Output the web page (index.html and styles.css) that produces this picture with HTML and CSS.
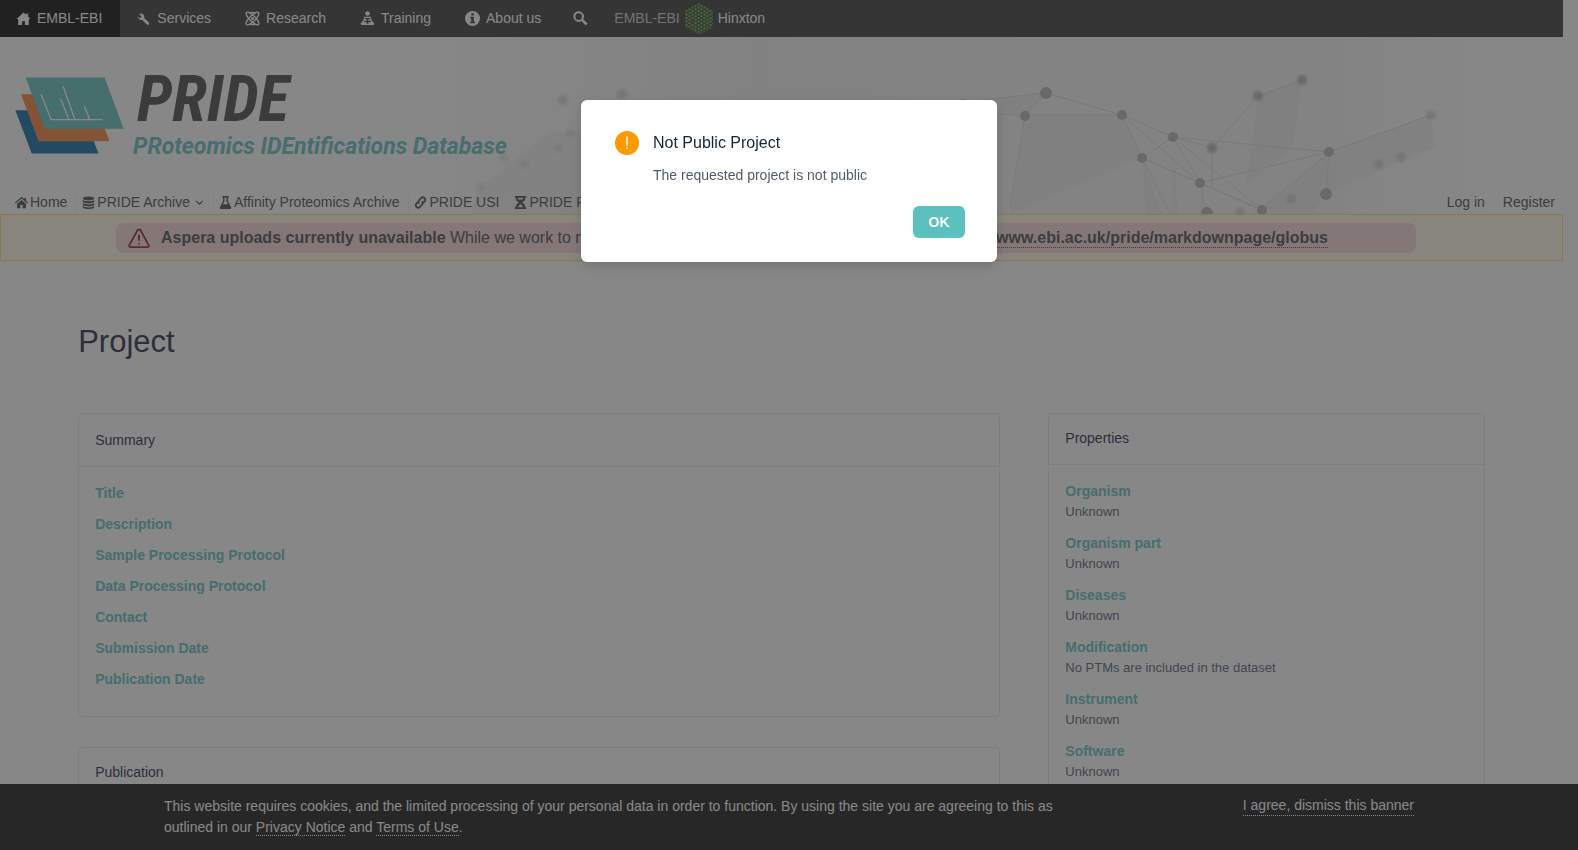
FILE: index.html
```html
<!DOCTYPE html>
<html lang="en">
  <head>
    <meta charset="UTF-8" />
    <meta name="viewport" content="width=device-width, initial-scale=1.0" />
    <title>PRIDE - Proteomics Identification Database</title>
    <link rel="stylesheet" href="styles.css">
  </head>
  <body>
    <div class="page">
      <nav class="topbar">
        <a class="active" href="#">
          <svg class="icon" viewBox="0 0 16 16"><path d="M8 1.5L.5 8.6h1.8V15h4.2v-4.2h3V15h4.2V8.6h1.8L13 6V2.6h-2v1.5z"/></svg>EMBL-EBI
        </a>
        <a href="#">
          <svg class="icon" viewBox="0 0 16 16"><path d="M3.200 3.200 L5.800 5.600 5 7.400 3 7.300 2 5.400C1.800 8.200 3.800 10 6.500 9.400L11.500 14.300C13.500 15.600 15 13.500 13.600 12L8.800 7.600C9.300 5 8 2.800 5.300 2.600z"/></svg>Services
        </a>
        <a href="#">
          <svg class="icon line" viewBox="0 0 16 16"><ellipse cx="8" cy="8" rx="9" ry="3" transform="rotate(45 8 8)"/><ellipse cx="8" cy="8" rx="9" ry="3" transform="rotate(-45 8 8)"/><path d="M5 2.500C7 1 9 1 11 2.500M5 13.500C7 15 9 15 11 13.500"/><circle cx="8" cy="8" r="1"/></svg>Research
        </a>
        <a href="#">
          <svg class="icon" viewBox="0 0 16 16"><circle cx="8" cy="2.600" r="2.400"/><path fill-rule="evenodd" d="M4.500 6h7l1 4 3 3.500-1 1.500H1.500l-1-1.500 3-3.500zM5 7.500h6v1H9v2h2.500v1.500H9v1.500H7v-1.500H4.500v-1.500H7v-2H5z"/></svg>Training
        </a>
        <a href="#">
          <svg class="icon" viewBox="0 0 16 16"><path fill-rule="evenodd" d="M8 0a8 8 0 1 0 0 16A8 8 0 0 0 8 0zM6.800 2.500h2.600v2.400H6.800zM5.500 6.200h3.900v5.300h1.100V13h-5v-1.500h1.200V7.700H5.500z"/></svg>About us
        </a>
        <a class="search" href="#" aria-label="Search">
          <svg class="icon" viewBox="0 0 16 16"><path fill-rule="evenodd" d="M6 .3a5.600 5.600 0 1 0 3 10.300l4.600 4.800 2-2-4.700-4.600A5.600 5.600 0 0 0 6 .3zM6 2.500a3.500 3.500 0 1 1 0 7 3.500 3.500 0 0 1 0-7z"/></svg>
        </a>
        <a class="location" href="#">
          <span class="thin">EMBL-EBI</span>
          <svg class="hexagon" viewBox="0 0 28 32">
            <defs>
              <pattern id="dots" width="6" height="3.500" patternUnits="userSpaceOnUse">
                <circle cx="1.500" cy="1" r="1.200"/><circle cx="4.500" cy="2.700" r="1.200"/>
                <circle cx="4.500" cy="-.8" r="1.200"/>
              </pattern>
            </defs>
            <polygon points="14,0 28,8 28,24 14,32 0,24 0,8" fill="url(#dots)"/>
            <circle class="here" cx="8" cy="19" r="1.400"/>
          </svg>
          Hinxton
        </a>
      </nav>

      <header class="header">
        <svg class="network" viewBox="0 0 1163 177">
          <defs>
            <linearGradient id="fade">
              <stop offset="0" stop-color="#f3f3f3" stop-opacity="0"/>
              <stop offset=".3" stop-color="#f3f3f3"/>
              <stop offset=".8" stop-color="#f5f5f5"/>
              <stop offset="1" stop-color="#fff" stop-opacity="0"/>
            </linearGradient>
            <filter id="soft"><feGaussianBlur stdDeviation="1.500"/></filter>
          </defs>
          <rect width="1163" height="177" fill="url(#fade)"/>
          <g class="facets">
            <polygon points="555,66 646,56 625,79"/>
            <polygon points="625,79 722,78 742,121 610,177"/>
            <polygon points="858,59 902,43 893,110 846,150"/>
            <polygon points="929,115 1031,78 1035,110 926,157"/>
            <polygon points="742,121 762,177 746,177"/>
            <polygon points="773,100 778,177 771,177"/>
            <polygon points="929,115 926,157 912,177 850,177"/>
            <polygon points="80,150 150,95 181,95 181,177 70,177"/>
          </g>
          <path class="edges" d="M555 66L646 56 722 78H625L646 56M722 78L773 100 742 121zM722 78L800 146 742 121 862 173 800 146 773 100 862 173M773 100L929 115 800 146M929 115L862 173M929 115L926 157M773 100L812 111 858 59 902 43M812 111V150M800 146L806 176M742 121L770 177M625 79L610 170M555 73L625 79M929 115L1031 78"/>
          <g class="nodes">
            <circle cx="646" cy="56" r="6"/>
            <circle cx="625" cy="79" r="5"/>
            <circle cx="722" cy="78" r="5"/>
            <circle cx="773" cy="100" r="5"/>
            <circle cx="742" cy="121" r="5"/>
            <circle cx="800" cy="146" r="5"/>
            <circle cx="929" cy="115" r="5"/>
            <circle cx="926" cy="157" r="6"/>
            <circle cx="862" cy="173" r="5"/>
            <circle cx="807" cy="176" r="6"/>
            <circle cx="563" cy="67" r="5"/>
          </g>
          <g class="nodes blurred">
            <circle cx="858" cy="59" r="5"/>
            <circle cx="902" cy="43" r="5"/>
            <circle cx="812" cy="111" r="5"/>
          </g>
          <g class="nodes blurred faint">
            <circle cx="222" cy="57" r="5"/>
            <circle cx="163" cy="63" r="5"/>
            <circle cx="1031" cy="78" r="5"/>
            <circle cx="979" cy="127" r="5"/>
            <circle cx="1001" cy="120" r="5"/>
            <circle cx="891" cy="162" r="5"/>
            <circle cx="840" cy="176" r="5"/>
          </g>
          <g class="nodes blurred fainter">
            <circle cx="170" cy="96" r="5"/>
            <circle cx="104" cy="122" r="5"/>
            <circle cx="124" cy="127" r="5"/>
            <circle cx="158" cy="111" r="5"/>
            <circle cx="80" cy="150" r="5"/>
          </g>
        </svg>

        <a class="brand" href="#">
          <svg class="logo" viewBox="45 231 325 229">
            <polygon fill="#05669d" points="46,330 245,330 294,459 95,459"/>
            <polygon fill="#f57d34" points="63,282 272,282 327,422 115,422"/>
            <polygon fill="#5bc0be" points="77,232 312,232 369,385 133,385"/>
            <path class="peaks" d="M123 283L153 358H304M189 260L224 358M182 298L206 358M253 320L268 358"/>
          </svg>
          <span class="brand-text">
            <span class="brand-name">PRIDE</span>
            <span class="tagline">PRoteomics IDEntifications Database</span>
          </span>
        </a>

        <nav class="menu">
          <a href="#"><svg class="icon" viewBox="0 0 16 16"><path d="M8 1L0 8l1 1.200 7-6 7 6L16 8l-2.500-2.200V2h-2v2zM8 4.800l-5.500 4.700V15h4v-4h3v4h4V9.500z"/></svg>Home</a>
          <a href="#"><svg class="icon" viewBox="0 0 16 16"><ellipse cx="8" cy="3" rx="7" ry="2.500"/><path d="M1 4.500c2 2.500 12 2.500 14 0v3c-2 2.300-12 2.300-14 0zM1 8.700c2 2.300 12 2.300 14 0v2.500c-2 2.300-12 2.300-14 0zM1 12.400c2 2.300 12 2.300 14 0V14c-2 2.500-12 2.500-14 0z"/></svg>PRIDE Archive<svg class="chevron" viewBox="0 0 8 8"><path d="M1 2.500l3 3 3-3"/></svg></a>
          <a href="#"><svg class="icon" viewBox="0 0 16 16"><path fill-rule="evenodd" d="M4 0h8v1.800h-1V6l4 8c.5 1-.2 2-1.200 2H2.200C1.200 16 .5 15 1 14l4-8V1.800H4zM6.800 1.800v4.700L4.800 10h6.400l-2-3.500V1.800z"/></svg>Affinity Proteomics Archive</a>
          <a href="#"><svg class="icon link-icon" viewBox="0 0 16 16"><path d="M6.500 9.500C5 8 5.200 6.300 6.300 5.200l2.500-2.800c2.500-2.400 6.800 1.200 4.200 4.300l-1.600 1.700M9.500 6.500c1.500 1.500 1.300 3.200.2 4.300l-2.500 2.800C4.700 16 .4 12.400 3 9.300l1.600-1.700"/></svg>PRIDE USI</a>
          <a href="#"><svg class="icon" viewBox="0 0 16 16"><path fill-rule="evenodd" d="M1 0h14v2.200h-1C14 5 12 7 10 8c2 1 4 3 4 5.800h1V16H1v-2.200h1C2 11 4 9 6 8 4 7 2 5 2 2.200H1zM4.500 2.200l1 2h5l1-2zM4.500 13.800h7L8 9.800z"/></svg>PRIDE Peptidome</a>
          <span class="account">
            <a href="#">Log in</a>
            <a href="#">Register</a>
          </span>
        </nav>
      </header>

      <div class="notice">
        <div class="notice-inner">
          <svg class="warning" viewBox="0 0 24 24"><path d="M12 2.500c.8 0 1.300.4 1.700 1l8.700 16c.8 1.500 0 2.500-1.500 2.500H3.100c-1.500 0-2.300-1-1.500-2.500l8.700-16c.4-.6.900-1 1.700-1zM12 8.500v6.500M12 17.500v1.500"/></svg>
          <p><b>Aspera uploads currently unavailable</b> While we work to resolve this, please upload with Globus:</p>
          <a href="#">www.ebi.ac.uk/pride/markdownpage/globus</a>
        </div>
      </div>

      <main class="content">
        <h1>Project</h1>
        <div class="columns">
          <div class="column">
            <section class="card summary">
              <h2>Summary</h2>
              <div class="card-body">
                <h3>Title</h3>
                <h3>Description</h3>
                <h3>Sample Processing Protocol</h3>
                <h3>Data Processing Protocol</h3>
                <h3>Contact</h3>
                <h3>Submission Date</h3>
                <h3>Publication Date</h3>
              </div>
            </section>
            <section class="card">
              <h2>Publication</h2>
              <div class="card-body">
                <p>Publication pending</p>
              </div>
            </section>
          </div>
          <section class="card">
            <h2>Properties</h2>
            <dl class="card-body">
              <dt>Organism</dt>
              <dd>Unknown</dd>
              <dt>Organism part</dt>
              <dd>Unknown</dd>
              <dt>Diseases</dt>
              <dd>Unknown</dd>
              <dt>Modification</dt>
              <dd>No PTMs are included in the dataset</dd>
              <dt>Instrument</dt>
              <dd>Unknown</dd>
              <dt>Software</dt>
              <dd>Unknown</dd>
            </dl>
          </section>
        </div>
      </main>
    </div>

    <div class="cookies">
      <p>
        This website requires cookies, and the limited processing of your
        personal data in order to function. By using the site you are agreeing
        to this as outlined in our <a href="#">Privacy Notice</a> and
        <a href="#">Terms of Use</a>.
      </p>
      <a href="#">I agree, dismiss this banner</a>
    </div>

    <div class="mask">
      <div class="modal" role="dialog" aria-labelledby="modalTitle">
        <div class="modal-head">
          <svg viewBox="0 0 24 24"><circle cx="12" cy="12" r="12"/><path d="M11.200 5.500h1.600l-.2 9.500h-1.200zM11.200 16.500h1.600V18h-1.600z"/></svg>
          <h2 id="modalTitle">Not Public Project</h2>
        </div>
        <p>The requested project is not public</p>
        <button type="button">OK</button>
      </div>
    </div>
  </body>
</html>
```

FILE: styles.css
```css
* {
  box-sizing: border-box;
}
html,
body {
  height: 100%;
  overflow: hidden;
}
body {
  margin: 0;
  font-family: "Liberation Sans", Arial, sans-serif;
  font-size: 14px;
  line-height: 21px;
  color: #515a6e;
  background-color: #fff;
}
h1,
h2,
h3,
p,
dl,
dd {
  margin: 0;
}
a {
  color: inherit;
  text-decoration: none;
}
.page {
  padding-right: 15px;
}

/* top bar */
.topbar {
  display: flex;
  height: 37px;
  background-color: #333;
  color: #fff;
}
.topbar a {
  display: flex;
  align-items: center;
  gap: 6px;
  padding: 0 18px 0 16px;
}
.topbar .active {
  background-color: #000;
}
.topbar .icon {
  width: 15px;
  height: 15px;
  fill: #fff;
}
.topbar .line {
  fill: none;
  stroke: #fff;
  stroke-width: 1.3;
}
.topbar .search {
  padding: 0 16px 0 14px;
}
.topbar .location {
  gap: 5px;
  padding: 0 10px;
}
.thin {
  color: #ccc;
}
.hexagon {
  width: 28px;
  height: 32px;
  fill: #61b53b;
}
.here {
  fill: #e2001a;
}

/* header */
.header {
  position: relative;
  height: 177px;
  padding: 40px 0 0 15px;
  display: flex;
  flex-direction: column;
  justify-content: space-between;
  overflow: hidden;
}
.network {
  position: absolute;
  top: 0;
  right: 0;
  width: 1163px;
  height: 177px;
}
.facets {
  fill: #e6e6e6;
  opacity: 0.4;
}
.edges {
  fill: none;
  stroke: #dcdcdc;
  stroke-width: 1;
}
.nodes {
  fill: #b5b5b5;
}
.blurred {
  filter: url(#soft);
}
.faint {
  opacity: 0.5;
}
.fainter {
  opacity: 0.25;
}
.brand,
.menu {
  position: relative;
}
.brand {
  display: flex;
  gap: 9px;
}
.logo {
  width: 109px;
  height: 77px;
}
.peaks {
  fill: none;
  stroke: #fff;
  stroke-width: 4;
  stroke-linecap: round;
}
.brand-text {
  display: flex;
  flex-direction: column;
  gap: 12px;
  font-weight: bold;
  font-style: italic;
  white-space: nowrap;
}
.brand-name {
  padding-left: 4px;
  font-family: "Roboto Condensed", Roboto, sans-serif;
  font-size: 64px;
  line-height: 46px;
  color: #414141;
}
.tagline {
  font-family: Roboto, sans-serif;
  font-size: 23px;
  line-height: 24px;
  color: #5bc0be;
}
.menu {
  display: flex;
  height: 23px;
  line-height: 23px;
  color: #464646;
}
.menu > a {
  display: flex;
  align-items: center;
  gap: 2px;
  padding: 0 9px 0 5px;
  border-right: 1px solid #f4f4f4;
}
.menu > a:first-child {
  padding-left: 0;
}
.menu .icon {
  width: 13px;
  height: 13px;
  fill: #464646;
}
.menu .link-icon {
  fill: none;
  stroke: #464646;
  stroke-width: 2.2;
}
.chevron {
  width: 9px;
  height: 9px;
  margin-left: 3px;
  fill: none;
  stroke: #464646;
}
.account {
  display: flex;
  gap: 18px;
  margin-left: auto;
  padding-right: 8px;
}

/* service notice */
.notice {
  padding: 8px 115px 7px;
  border: 1px solid #ffd77a;
  background-color: #fff9e6;
}
.notice-inner {
  display: flex;
  align-items: center;
  height: 30px;
  margin-right: 31px;
  padding: 0 88px 0 12px;
  border-radius: 8px;
  background-color: #f8d7da;
  font-size: 16px;
  line-height: 20px;
  color: #464646;
}
.warning {
  width: 22px;
  height: 22px;
  margin-right: 11px;
  fill: none;
  stroke: #842029;
  stroke-width: 2;
}
.notice a {
  margin-left: auto;
  border-bottom: 1px dotted #464646;
  font-weight: bold;
  line-height: 18px;
}

/* project */
.content {
  padding: 60px 5% 0;
}
h1 {
  margin-bottom: 51px;
  font-size: 31px;
  font-weight: normal;
  line-height: 41px;
  color: #17233d;
}
.columns {
  display: grid;
  grid-template-columns: 921fr 436fr;
  gap: 48px;
}
.column {
  display: flex;
  flex-direction: column;
  gap: 30px;
}
.card {
  border: 1px solid #e8eaec;
  border-radius: 4px;
}
.card h2 {
  padding: 14px 16px 15px;
  border-bottom: 1px solid #e8eaec;
  font-size: 14px;
  font-weight: normal;
  line-height: 21px;
  color: #17233d;
}
.summary h2 {
  padding: 16px 16px 15px;
}
.card-body {
  padding: 16px;
}
.card h3,
.card dt {
  font-size: 14px;
  font-weight: bold;
  color: #5bc0be;
}
.card h3 {
  margin-bottom: 10px;
}
.card dd {
  margin-bottom: 12px;
  font-size: 13px;
  line-height: 19px;
}

/* cookie banner */
.cookies {
  position: fixed;
  bottom: 0;
  left: 0;
  right: 0;
  display: grid;
  grid-template-columns: 900px auto;
  justify-content: space-between;
  align-items: start;
  height: 66px;
  padding: 12px 164px;
  border-bottom: 1px solid #1a0508;
  background-color: #111;
  color: #fff;
}
.cookies a {
  border-bottom: 1px dotted #fff;
  line-height: 19px;
}

/* modal */
.mask {
  position: fixed;
  inset: 0;
  padding-top: 100px;
  background-color: rgba(55, 55, 55, 0.6);
}
.modal {
  display: flex;
  flex-direction: column;
  width: 416px;
  margin: 0 auto;
  padding: 31px 32px 24px 34px;
  border-radius: 6px;
  background-color: #fff;
  box-shadow: 0 4px 12px rgba(0, 0, 0, 0.15);
}
.modal-head {
  display: flex;
  align-items: center;
  gap: 14px;
}
.modal-head svg {
  width: 24px;
  height: 24px;
}
.modal-head circle {
  fill: #f90;
}
.modal-head path {
  fill: #fff;
}
.modal h2 {
  font-size: 16px;
  font-weight: normal;
  line-height: 24px;
  color: #17233d;
}
.modal p {
  margin: 10px 0 20px 38px;
}
.modal button {
  align-self: flex-end;
  width: 52px;
  height: 32px;
  padding: 0;
  border: 0;
  border-radius: 6px;
  background-color: #5bc0be;
  color: #fff;
  font-family: inherit;
  font-size: 14px;
  font-weight: bold;
  cursor: pointer;
}
```
